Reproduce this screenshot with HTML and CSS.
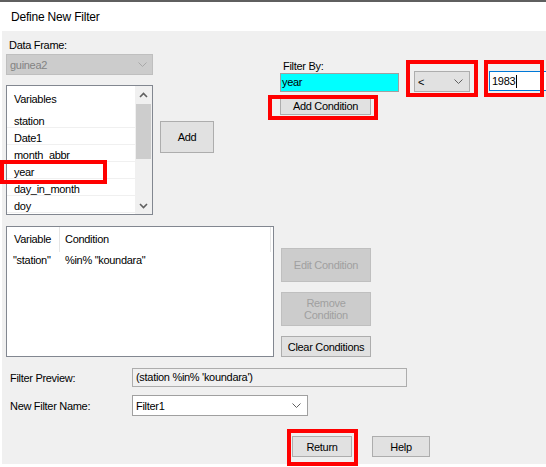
FILE: index.html
```html
<!DOCTYPE html>
<html>
<head>
<meta charset="utf-8">
<link rel="stylesheet" href="styles.css">
</head>
<body>
<div class="screen">
  <div class="topline"></div>
  <div class="titlebar">Define New Filter</div>
  <div class="dialog">
    <div class="top">
      <div class="left">
        <div class="lbl">Data Frame:</div>
        <div class="combo df-combo">
          <span>guinea2</span>
          <svg width="9" height="5" viewBox="0 0 9 5"><path d="M0.5 0.5 L4.5 4.5 L8.5 0.5" fill="none" stroke="#a8a8a8" stroke-width="1"/></svg>
        </div>
        <div class="listbox">
          <div class="lb-items">
            <div class="lb-head">Variables</div>
            <div class="lb-row">station</div>
            <div class="lb-row">Date1</div>
            <div class="lb-row">month_abbr</div>
            <div class="lb-row">year</div>
            <div class="lb-row">day_in_month</div>
            <div class="lb-row">doy</div>
          </div>
          <div class="vscroll">
            <div class="sb-btn"><svg width="9" height="6" viewBox="0 0 9 6"><path d="M1 5 L4.5 1.5 L8 5" fill="none" stroke="#606060" stroke-width="1.6"/></svg></div>
            <div class="thumb"></div>
            <div class="sb-spacer"></div>
            <div class="sb-btn"><svg width="9" height="6" viewBox="0 0 9 6"><path d="M1 1 L4.5 4.5 L8 1" fill="none" stroke="#606060" stroke-width="1.6"/></svg></div>
          </div>
        </div>
      </div>
      <button class="btn add">Add</button>
      <div class="filterby">
        <div class="lbl">Filter By:</div>
        <div class="tb cyan">year</div>
        <button class="btn addcond">Add Condition</button>
      </div>
      <div class="combo op">
        <span>&lt;</span>
        <svg width="9" height="5" viewBox="0 0 9 5"><path d="M0.5 0.5 L4.5 4.5 L8.5 0.5" fill="none" stroke="#606060" stroke-width="1"/></svg>
      </div>
      <div class="tb value">1983<span class="caret"></span></div>
    </div>

    <div class="mid">
      <div class="conds">
        <div class="c-head">
          <div class="c1">Variable</div>
          <div class="c2">Condition</div>
        </div>
        <div class="c-row">
          <div class="c1">"station"</div>
          <div class="c2">%in% "koundara"</div>
        </div>
      </div>
      <div class="side">
        <button class="btn dis edit">Edit Condition</button>
        <button class="btn dis remove">Remove<br>Condition</button>
        <button class="btn clear">Clear Conditions</button>
      </div>
    </div>

    <div class="form">
      <div class="frow">
        <div class="flbl">Filter Preview:</div>
        <div class="preview">(station %in% 'koundara')</div>
      </div>
      <div class="frow">
        <div class="flbl">New Filter Name:</div>
        <div class="combo name">
          <span>Filter1</span>
          <svg width="9" height="5" viewBox="0 0 9 5"><path d="M0.5 0.5 L4.5 4.5 L8.5 0.5" fill="none" stroke="#606060" stroke-width="1"/></svg>
        </div>
      </div>
    </div>

    <div class="actions">
      <button class="btn ret">Return</button>
      <button class="btn help">Help</button>
    </div>
  </div>

  <div class="mark m-year"></div>
  <div class="mark m-addcond"></div>
  <div class="mark m-op"></div>
  <div class="mark m-value"></div>
  <div class="mark m-ret"></div>
</div>
</body>
</html>
```
FILE: styles.css
```css
* { box-sizing: border-box; }
html, body { margin: 0; padding: 0; }
body {
  width: 546px;
  height: 467px;
  overflow: hidden;
  background: #ffffff;
  color: #000;
  font-family: "Liberation Sans", Arial, sans-serif;
  font-size: 11px;
  letter-spacing: -0.3px;
}
.screen { position: relative; width: 546px; height: 467px; }
.topline { height: 2px; background: #5f5f5f; }
.titlebar {
  height: 29px;
  padding: 8px 0 0 11px;
  font-size: 12px;
  line-height: 15px;
  letter-spacing: -0.2px;
  background: #fff;
}
.dialog {
  margin-left: 2px;
  height: 433px;
  background: #f0f0f0;
  padding-left: 4px;
  overflow: hidden;
}
.top { display: flex; align-items: flex-start; }
.left { width: 147px; flex: none; padding-top: 7px; }
.lbl { line-height: 14px; white-space: nowrap; padding-left: 3px; }

.combo {
  display: flex;
  align-items: center;
  justify-content: space-between;
  border: 1px solid #7a7a7a;
  white-space: nowrap;
}
.combo svg { flex: none; }
.df-combo {
  margin-top: 2px;
  height: 21px;
  background: #cccccc;
  border-color: #bfbfbf;
  color: #838383;
  padding: 0 5px 0 3px;
}

.listbox {
  margin-top: 10px;
  height: 130px;
  border: 1px solid #828790;
  background: #fff;
  display: flex;
  overflow: hidden;
}
.lb-items { flex: 1; overflow: hidden; }
.lb-head { padding: 8px 0 6px 7px; line-height: 11px; }
.lb-row {
  height: 17px;
  padding: 5px 0 0 7px;
  line-height: 11px;
  border-bottom: 1px solid #f0f0f0;
  white-space: nowrap;
}
.vscroll {
  width: 17px;
  flex: none;
  background: #f0f0f0;
  display: flex;
  flex-direction: column;
  align-items: center;
}
.sb-btn { width: 17px; height: 17px; display: flex; align-items: center; justify-content: center; flex: none; }
.thumb { width: 15px; height: 55px; margin-top: 1px; background: #cdcdcd; flex: none; }
.sb-spacer { flex: 1; }

.btn {
  margin: 0;
  padding: 0;
  font-family: inherit;
  font-size: 11px;
  letter-spacing: -0.3px;
  color: #000;
  background: #e1e1e1;
  border: 1px solid #adadad;
  border-radius: 0;
  display: flex;
  align-items: center;
  justify-content: center;
  text-align: center;
  line-height: 12px;
  white-space: nowrap;
  flex: none;
}
.add { margin: 90px 0 0 7px; width: 54px; height: 32px; }

.filterby { margin: 28px 0 0 66px; width: 119px; flex: none; }
.tb {
  height: 19px;
  border: 1px solid #7a7a7a;
  padding-left: 1px;
  line-height: 17px;
  white-space: nowrap;
}
.cyan { background: #00ffff; border-color: #a0a0a0; }
.addcond { margin-top: 4px; width: 91px; height: 19px; }

.op {
  margin: 40px 0 0 15px;
  width: 56px;
  height: 21px;
  flex: none;
  background: #e1e1e1;
  border-color: #adadad;
  padding: 0 6px 0 3px;
}
.value {
  margin: 40px 0 0 19px;
  width: 70px;
  height: 20px;
  flex: none;
  background: #fff;
  border-color: #0078d7;
  padding-left: 2px;
  line-height: 18px;
  display: flex;
  align-items: center;
}
.caret { display: inline-block; width: 1px; height: 13px; background: #000; margin-left: 1px; }

.mid { display: flex; align-items: flex-start; margin-top: 11px; }
.conds {
  width: 268px;
  height: 131px;
  flex: none;
  background: #fff;
  border: 1px solid #828790;
}
.c-head, .c-row { display: flex; white-space: nowrap; }
.c-head { height: 25px; }
.c-head .c1 { width: 53px; padding: 7px 0 0 7px; line-height: 11px; border-right: 1px solid #e5e5e5; }
.c-head .c2 { width: 211px; padding: 7px 0 0 5px; line-height: 11px; border-right: 1px solid #e5e5e5; }
.c-row { height: 17px; }
.c-row .c1 { width: 53px; padding: 3px 0 0 6px; line-height: 11px; }
.c-row .c2 { padding: 3px 0 0 5px; line-height: 11px; }

.side { margin: 22px 0 0 7px; width: 90px; display: flex; flex-direction: column; gap: 10px; }
.side .btn { width: 90px; }
.dis { background: #cccccc; border-color: #bfbfbf; color: #a0a0a0; }
.edit, .remove { height: 34px; }
.clear { height: 21px; }

.form { margin-top: 11px; padding-left: 4px; display: flex; flex-direction: column; gap: 8px; }
.frow { display: flex; align-items: center; }
.flbl { width: 122px; flex: none; line-height: 14px; white-space: nowrap; }
.preview {
  width: 275px;
  height: 19px;
  border: 1px solid #adadad;
  background: #f0f0f0;
  padding-left: 3px;
  line-height: 17px;
  white-space: nowrap;
}
.name { width: 176px; height: 21px; background: #fff; border-color: #a0a0a0; padding: 0 6px 0 3px; }

.actions { display: flex; gap: 20px; margin: 20px 0 0 286px; }
.ret { width: 60px; height: 21px; }
.help { width: 58px; height: 21px; }

.mark { position: absolute; border: 4px solid #ff0000; }
.m-year { left: 0; top: 160px; width: 107px; height: 24px; }
.m-addcond { left: 268px; top: 95px; width: 110px; height: 25px; }
.m-op { left: 406px; top: 60px; width: 72px; height: 37px; }
.m-value { left: 484px; top: 60px; width: 60px; height: 37px; }
.m-ret { left: 287px; top: 429px; width: 71px; height: 37px; }
```
